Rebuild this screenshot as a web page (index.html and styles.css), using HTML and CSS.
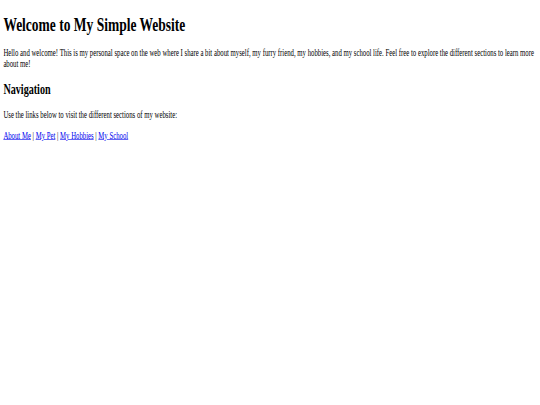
FILE: index.html
```html
<!DOCTYPE html>
<html lang="en">
<head>
<meta charset="utf-8">
<title>My Simple Website</title>
<link rel="stylesheet" href="styles.css">
</head>
<body>
<div class="frame">
<div class="page">
  <h1 class="title">Welcome to My Simple Website</h1>
  <p class="text">Hello and welcome! This is my personal space on the web where I share a bit about myself, my furry friend, my hobbies, and my school life. Feel free to explore the different sections to learn more about me!</p>
  <h2 class="subtitle">Navigation</h2>
  <p class="text">Use the links below to visit the different sections of my website:</p>
  <p class="text nav"><a href="#about" class="link">About Me</a> | <a href="#pet" class="link">My Pet</a> | <a href="#hobbies" class="link">My Hobbies</a> | <a href="#school" class="link">My School</a></p>
</div>
</div>
</body>
</html>
```

FILE: styles.css
```css
html, body {
  margin: 0;
  padding: 0;
  background: #ffffff;
  overflow: hidden;
}

.frame {
  width: 540px;
  height: 405px;
  overflow: hidden;
}

.page {
  width: 1280px;
  height: 675px;
  box-sizing: border-box;
  padding: 0.1px 8px;
  transform: scale(0.421875, 0.6);
  transform-origin: 0 0;
  font-family: "Liberation Serif", "Times New Roman", serif;
  font-size: 16px;
  color: #000000;
}

.title {
  font-size: 32px;
  font-weight: bold;
  margin: 21.44px 0;
}

.subtitle {
  font-size: 24px;
  font-weight: bold;
  margin: 19.92px 0;
}

.text {
  margin: 16px 0;
}

.link {
  color: #0000ee;
  text-decoration: underline;
}
```
